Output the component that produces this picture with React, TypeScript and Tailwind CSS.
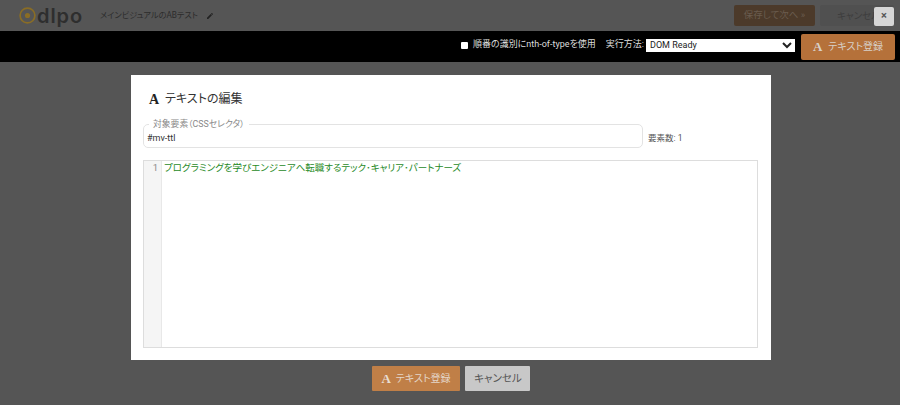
function SerifA({ className }: { className: string }) {
  return <span className={"font-bold [font-family:'Liberation_Serif',serif] " + className}>A</span>;
}

export default function App() {
  return (
    <div className="relative h-[405px] w-[900px] overflow-hidden bg-[#555555] [font-family:Roboto,'Noto_Sans_CJK_JP',sans-serif] [font-feature-settings:'palt']">
      <header className="flex h-[31px] items-center pl-[19px] pr-[6px]">
        <svg width="17" height="17" viewBox="0 0 17 17" className="mt-[-1px] shrink-0">
          <circle cx="8.5" cy="8.5" r="7.4" fill="none" stroke="#8a6d25" strokeWidth="1.7" />
          <circle cx="8.5" cy="8.5" r="2.6" fill="#8a6d25" />
        </svg>
        <span className="ml-[1px] w-[46px] text-[20px] leading-none font-semibold tracking-[0.9px] text-[#2e2e2e] [font-family:Inter,sans-serif]">dlpo</span>
        <span className="ml-[17px] text-[8.2px] text-[#2c2c2c]">メインビジュアルのABテスト</span>
        <svg width="8" height="8" viewBox="0 0 24 24" className="ml-[8px]" fill="#222">
          <path d="M3 17.25V21h3.75L17.8 9.94l-3.75-3.75L3 17.25zM20.7 7.04a1 1 0 0 0 0-1.41l-2.34-2.34a1 1 0 0 0-1.41 0l-1.83 1.83 3.75 3.75 1.83-1.83z" />
        </svg>
        <div className="ml-auto flex gap-[5px]">
          <div className="flex h-[21px] w-[81px] items-center justify-center rounded-[2px] bg-[#4c3a2a] text-[9.5px] text-[#6a5c4e]">保存して次へ »</div>
          <div className="h-[21px] w-[74px] whitespace-nowrap rounded-[2px] bg-[#505050] pl-[17px] text-[9.5px] leading-[21px] text-[#3d3d3d]">キャンセル</div>
        </div>
      </header>
      <button className="absolute right-[6px] top-[7px] flex h-[19px] w-[20px] items-center justify-center rounded-[2px] bg-[#d6d6d6] text-[11px] font-bold text-[#555]">×</button>

      <div className="flex h-[31px] items-center justify-end bg-black pr-[5px] text-[9px] text-[#dddddd]">
        <input type="checkbox" className="mb-[3px] mr-[5px] h-[7px] w-[7px] appearance-none rounded-[1px] bg-white" />
        <span className="mb-[3px]">順番の識別にnth-of-typeを使用</span>
        <span className="mb-[3px] ml-[10px]">実行方法:</span>
        <select className="mb-[3px] ml-[2px] h-[13px] w-[149px] bg-white p-0 text-[9px] leading-[13px] text-[#222]">
          <option>DOM Ready</option>
        </select>
        <div className="ml-[6px] flex h-[26px] w-[94px] items-center justify-center rounded-[2px] bg-[#b5713a] text-[10px] text-[#d8d0c8]">
          <SerifA className="mr-[6px] text-[13px] text-[#d8d0c8]" />
          テキスト登録
        </div>
      </div>

      <main className="ml-[131px] mt-[13px] h-[285px] w-[640px] bg-white px-[12px] pt-[16px]">
        <h1 className="flex h-[16px] items-center pl-[6px] text-[12px] text-[#333]">
          <SerifA className="mr-[6px] text-[14px] text-[#222]" />
          テキストの編集
        </h1>
        <div className="mt-[13px] flex items-center">
          <fieldset className="h-[28px] w-[500px] rounded-[5px] border border-[#e3e3e3] px-[3px]">
            <legend className="ml-[2px] px-[4px] text-[8.8px] leading-[9px] text-[#888]">対象要素（CSSセレクタ）</legend>
            <div className="pt-[2px] text-[9px] leading-[14px] text-[#333]">#mv-ttl</div>
          </fieldset>
          <span className="ml-[5px] mt-[8px] text-[8.5px] text-[#555]">要素数: 1</span>
        </div>
        <div className="mt-[12px] flex h-[188px] w-[615px] border border-[#dddddd]">
          <div className="w-[18px] border-r border-[#e8e8e8] bg-[#f5f5f5] pr-[3px] pt-[1px] text-right text-[9.5px] leading-[12px] text-[#888]">1</div>
          <div className="pl-[2px] pt-[1px] text-[9.5px] leading-[12px] text-[#1f8a1f]">プログラミングを学びエンジニアへ転職するテック･キャリア･パートナーズ</div>
        </div>
      </main>

      <footer className="ml-[372px] mt-[6px] flex gap-[5px]">
        <div className="flex h-[25px] w-[88px] items-center justify-center rounded-[1px] bg-[#c07f47] text-[10px] text-[#e4d6c9]">
          <SerifA className="mr-[5px] text-[13px] text-[#e8ddd2]" />
          テキスト登録
        </div>
        <div className="flex h-[25px] w-[65px] items-center justify-center rounded-[1px] bg-[#c8c8c8] pl-[1px] text-[10.5px] text-[#555]">キャンセル</div>
      </footer>
    </div>
  );
}
